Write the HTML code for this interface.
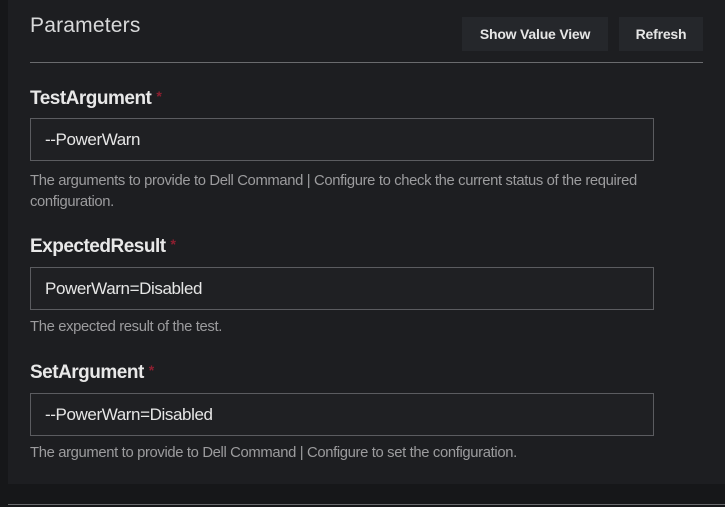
<!DOCTYPE html><html><head><style>
body{margin:0;width:725px;height:507px;background:#161719;font-family:"Liberation Sans",sans-serif;overflow:hidden;position:relative}
.panel{position:absolute;left:8px;top:0;width:717px;height:484px;background:#1d1e21}
.a{position:absolute;white-space:nowrap}
.t{left:30px;top:14px;font-size:21px;color:#d8d9da;font-weight:300;letter-spacing:0.2px}
.btn{position:absolute;top:17px;height:34px;background:#25272b;color:#e6e6e6;font-size:14px;font-weight:bold;line-height:34px;text-align:center;letter-spacing:-0.2px}
.rule{position:absolute;left:30px;top:62px;width:673px;height:1px;background:#6a6b6e}
.lbl{left:30px;font-size:19px;font-weight:bold;color:#e8e8e8;letter-spacing:-0.5px}
.lbl span{color:#8e1f30;font-size:14px;vertical-align:top;margin-left:5px}
.in{position:absolute;left:30px;border:1px solid #5b5c60;background:#1f2023;color:#e6e6e6;font-size:17px;line-height:41px;padding-left:14px;box-sizing:border-box;width:624px;height:43px;letter-spacing:-0.4px}
.h{left:30px;font-size:14.8px;color:#9c9c9e;line-height:21px;letter-spacing:-0.35px}
</style></head><body>
<div class="panel"></div>
<div class="a t">Parameters</div>
<div class="btn" style="left:462px;width:146px">Show Value View</div>
<div class="btn" style="left:619px;width:84px">Refresh</div>
<div class="rule"></div>
<div class="a lbl" style="top:88px">TestArgument<span>*</span></div>
<div class="in" style="top:118px">--PowerWarn</div>
<div class="a h" style="top:171px">The arguments to provide to Dell Command | Configure to check the current status of the required<br>configuration.</div>
<div class="a lbl" style="top:236px">ExpectedResult<span>*</span></div>
<div class="in" style="top:267px">PowerWarn=Disabled</div>
<div class="a h" style="top:317px">The expected result of the test.</div>
<div class="a lbl" style="top:362px">SetArgument<span>*</span></div>
<div class="in" style="top:393px">--PowerWarn=Disabled</div>
<div class="a h" style="top:443px">The argument to provide to Dell Command | Configure to set the configuration.</div>
<div style="position:absolute;left:8px;top:504px;width:717px;height:1px;background:#6a6b6e"></div>
</body></html>
